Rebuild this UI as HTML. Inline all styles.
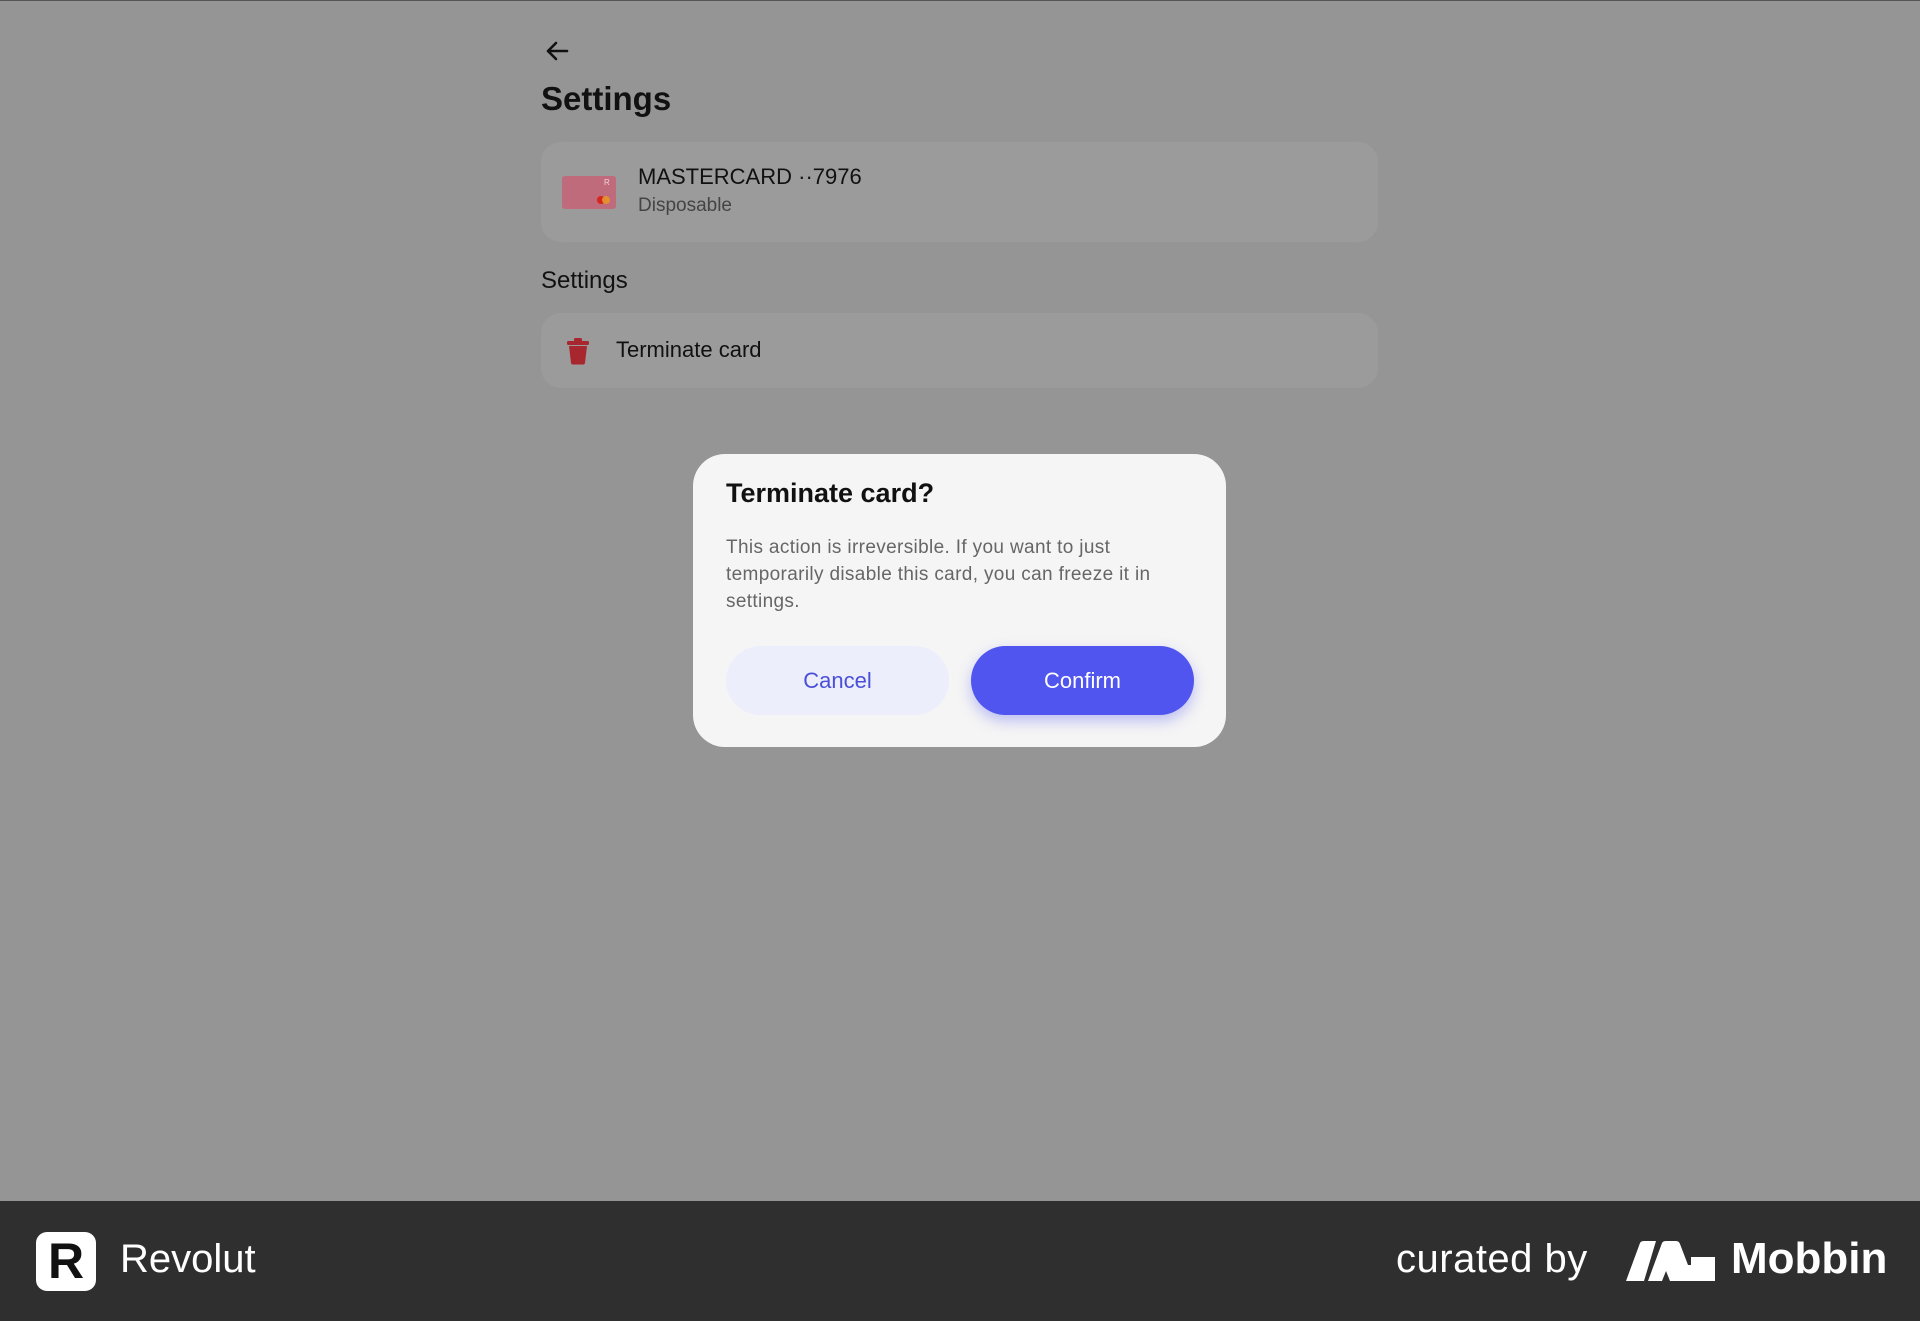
<!DOCTYPE html>
<html><head><meta charset="utf-8"><style>
*{margin:0;padding:0;box-sizing:border-box}
body{width:1920px;height:1320px;background:#959595;font-family:"Liberation Sans",sans-serif;position:relative;overflow:hidden;border-top:1px solid #555}
.a{position:absolute}
.box{background:#9b9b9b;border-radius:20px}
</style></head><body>
<svg class="a" style="left:543px;top:38px" width="28" height="24" viewBox="0 0 28 24"><path d="M24 12H5M13 4l-8 8 8 8" stroke="#111" stroke-width="2.6" fill="none" stroke-linecap="round" stroke-linejoin="round"/></svg>
<div class="a" style="left:541px;top:79px;font-size:33px;font-weight:bold;color:#111">Settings</div>
<div class="a box" style="left:541px;top:141px;width:837px;height:100px"></div>
<div class="a" style="left:562px;top:175px;width:54px;height:33px;background:#bf6b7c;border-radius:3px"></div>
<div class="a" style="left:604px;top:177px;font-size:8px;color:#f0d0d8">R</div>
<div class="a" style="left:597px;top:195px;width:8px;height:8px;border-radius:50%;background:#d4261c"></div>
<div class="a" style="left:602px;top:195px;width:8px;height:8px;border-radius:50%;background:#e8932a;opacity:.9"></div>
<div class="a" style="left:638px;top:163px;font-size:22px;color:#111">MASTERCARD ··7976</div>
<div class="a" style="left:638px;top:194px;font-size:19px;color:#444">Disposable</div>
<div class="a" style="left:541px;top:266px;font-size:24px;color:#111">Settings</div>
<div class="a box" style="left:541px;top:312px;width:837px;height:75px"></div>
<svg class="a" style="left:566px;top:336px" width="24" height="28" viewBox="0 0 24 28"><rect x="8" y="1" width="8" height="4" rx="1.5" fill="#a8262e"/><rect x="1" y="4" width="22" height="4" rx="1.5" fill="#a8262e"/><path d="M3 9h18l-2 17a2 2 0 0 1-2 1.5H7A2 2 0 0 1 5 26z" fill="#a8262e"/></svg>
<div class="a" style="left:616px;top:336px;font-size:22px;color:#111">Terminate card</div>
<div class="a" style="left:693px;top:453px;width:533px;height:293px;background:#f5f5f5;border-radius:32px"></div>
<div class="a" style="left:726px;top:477px;font-size:27px;font-weight:bold;color:#111">Terminate card?</div>
<div class="a" style="left:726px;top:533px;width:440px;font-size:19px;letter-spacing:.35px;line-height:27px;color:#666">This action is irreversible. If you want to just temporarily disable this card, you can freeze it in settings.</div>
<div class="a" style="left:726px;top:645px;width:223px;height:69px;border-radius:35px;background:#eceefc;color:#4a4fd8;font-size:22px;text-align:center;line-height:69px">Cancel</div>
<div class="a" style="left:971px;top:645px;width:223px;height:69px;border-radius:35px;background:#4f55ee;color:#fff;font-size:22px;text-align:center;line-height:69px;box-shadow:0 6px 14px rgba(79,85,238,.35)">Confirm</div>
<div class="a" style="left:0;top:1200px;width:1920px;height:120px;background:#2f2f2f"></div>
<div class="a" style="left:36px;top:1231px;width:60px;height:59px;background:#fff;border-radius:11px;color:#111;font-size:50px;font-weight:bold;text-align:center;line-height:59px">R</div>
<div class="a" style="left:120px;top:1236px;font-size:40px;color:#fff">Revolut</div>
<div class="a" style="left:1396px;top:1236px;font-size:40px;color:#fff;letter-spacing:.5px">curated by</div>
<svg class="a" style="left:1626px;top:1240px" width="89" height="40" viewBox="0 0 89 40"><path d="M0 40L14 2Q15 0 18 0h12L18 40zM22 40L36 2Q37 0 40 0h10q3 0 4 3l8 21h3V16h24v24H44l-4-10-4 10z" fill="#fff"/></svg>
<div class="a" style="left:1731px;top:1233px;font-size:44px;font-weight:bold;color:#fff">Mobbin</div>
</body></html>
